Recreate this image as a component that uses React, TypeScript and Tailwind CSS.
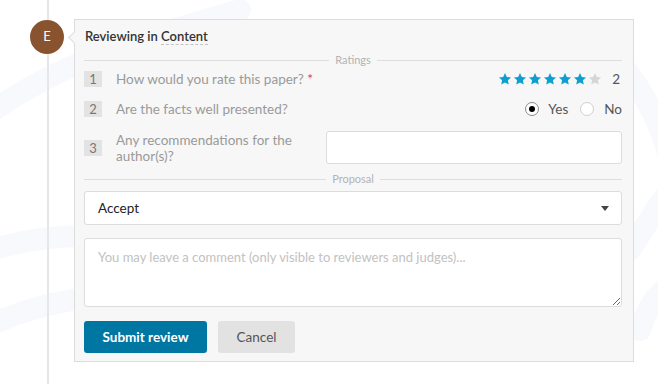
import { useState } from "react";

const font = { fontFamily: "Lato, 'Noto Sans', sans-serif" };

function Star({ filled }: { filled: boolean }) {
  return (
    <svg width="14" height="14" viewBox="0 0 24 24" className="shrink-0">
      <path
        d="M12 1.8l3.1 6.6 7.2.9-5.3 5 1.4 7.1L12 17.9l-6.4 3.5 1.4-7.1-5.3-5 7.2-.9z"
        fill={filled ? "#0e9fd2" : "#d6d6d6"}
      />
    </svg>
  );
}

function Divider({ label }: { label: string }) {
  return (
    <div className="flex items-center h-[14px]">
      <div className="flex-1 h-px bg-[#dedede]"></div>
      <span className="px-[6px] text-[11px] leading-[14px] text-[#b3b3b3]">{label}</span>
      <div className="flex-1 h-px bg-[#dedede]"></div>
    </div>
  );
}

function Num({ n }: { n: number }) {
  return (
    <div className="w-[18px] h-[16px] shrink-0 bg-[#e3e3e3] text-[#777] text-[13px] leading-[16px] text-center">
      {n}
    </div>
  );
}

export default function App() {
  const [facts, setFacts] = useState<"yes" | "no">("yes");
  const rating = 6;

  return (
    <div className="relative w-[658px] h-[384px] bg-white overflow-hidden" style={font}>
      {/* faint watermark in the background */}
      <svg className="absolute inset-0 pointer-events-none" width="658" height="384" viewBox="0 0 658 384">
        <g fill="none" stroke="#f7f9fd" strokeWidth="22" strokeLinecap="round">
          <path d="M-20 120 C 60 60, 140 40, 240 10" />
          <path d="M-10 250 C 60 230, 120 230, 200 260" />
          <path d="M-20 330 C 40 300, 100 290, 180 300" />
          <path d="M600 40 C 640 80, 660 120, 670 160" />
          <path d="M630 250 C 650 220, 660 200, 680 180" />
          <path d="M640 330 C 650 300, 660 290, 680 280" />
        </g>
      </svg>

      <div className="relative ml-[47px] h-full border-l-2 border-[#e6e6e6] pt-[19px]">
        <div className="flex items-start">
          <div className="-ml-[19px] mt-[1px] w-[34px] h-[34px] shrink-0 rounded-full bg-[#8a5330] text-white text-[13px] flex items-center justify-center">
            E
          </div>

          <div className="relative ml-[10px] w-[560px] bg-[#f7f7f7] border border-[#dcdcdc] pl-[9px] pr-[11px] pt-[6px] pb-[8px]">
            <div className="absolute -left-[5px] top-[13px] w-[9px] h-[9px] rotate-45 bg-[#f7f7f7] border-l border-b border-[#dcdcdc]"></div>

            <div className="h-[20px] leading-[20px] text-[13px] font-semibold text-[#333] pl-px">
              Reviewing in <span className="border-b border-dashed border-[#c4c4c4]">Content</span>
            </div>

            <div className="mt-[7px]">
              <Divider label="Ratings" />
            </div>

            {/* question 1 */}
            <div className="mt-[4px] h-[16px] flex items-center">
              <Num n={1} />
              <span className="ml-[14px] text-[13.5px] text-[#9a9a9a]">
                How would you rate this paper? <span className="text-[#e53935]">*</span>
              </span>
              <div className="ml-auto flex items-center gap-px">
                {[0, 1, 2, 3, 4, 5, 6].map((i) => (
                  <Star key={i} filled={i < rating} />
                ))}
                <span className="ml-[9px] mr-[2px] text-[13.5px] text-[#555]">2</span>
              </div>
            </div>

            {/* question 2 */}
            <div className="mt-[14px] h-[16px] flex items-center">
              <Num n={2} />
              <span className="ml-[14px] text-[13.5px] text-[#9a9a9a]">Are the facts well presented?</span>
              <div className="ml-auto flex items-center text-[13.5px] text-[#555]">
                <button onClick={() => setFacts("yes")} className="flex items-center">
                  <span
                    className={
                      facts === "yes"
                        ? "w-[14px] h-[14px] rounded-full border border-[#8a8a8a] bg-white flex items-center justify-center"
                        : "w-[14px] h-[14px] rounded-full border border-[#cfcfcf] bg-white flex items-center justify-center"
                    }
                  >
                    {facts === "yes" && <span className="w-[6px] h-[6px] rounded-full bg-black"></span>}
                  </span>
                  <span className="ml-[9px]">Yes</span>
                </button>
                <button onClick={() => setFacts("no")} className="ml-[12px] flex items-center">
                  <span
                    className={
                      facts === "no"
                        ? "w-[14px] h-[14px] rounded-full border border-[#8a8a8a] bg-white flex items-center justify-center"
                        : "w-[14px] h-[14px] rounded-full border border-[#cfcfcf] bg-white flex items-center justify-center"
                    }
                  >
                    {facts === "no" && <span className="w-[6px] h-[6px] rounded-full bg-black"></span>}
                  </span>
                  <span className="ml-[10px]">No</span>
                </button>
              </div>
            </div>

            {/* question 3 */}
            <div className="mt-[14px] h-[33px] flex items-center">
              <Num n={3} />
              <span className="ml-[14px] w-[196px] text-[13.5px] leading-[16px] text-[#9a9a9a]">
                Any recommendations for the author(s)?
              </span>
              <input className="ml-[14px] flex-1 h-[33px] bg-white border border-[#dcdcdc] rounded-[3px] px-[10px] text-[13px] outline-none" />
            </div>

            <div className="mt-[8px]">
              <Divider label="Proposal" />
            </div>

            <div className="mt-[5px] h-[34px] bg-white border border-[#dcdcdc] rounded-[3px] flex items-center pl-[13px] pr-[12px]">
              <span className="text-[13.5px] text-[#222]">Accept</span>
              <svg className="ml-auto" width="8" height="5" viewBox="0 0 8 5">
                <path d="M0 0h8L4 5z" fill="#444" />
              </svg>
            </div>

            <textarea
              className="mt-[13px] block w-full h-[69px] bg-white border border-[#dcdcdc] rounded-[3px] px-[13px] pt-[10px] text-[13px] leading-[16px] text-[#333] placeholder:text-[#c2c2c2] outline-none"
              placeholder="You may leave a comment (only visible to reviewers and judges)..."
            />

            <div className="mt-[14px] flex gap-[11px]">
              <button className="w-[123px] h-[32px] rounded-[3px] bg-[#0077a3] text-white text-[13.5px] font-bold">
                Submit review
              </button>
              <button className="w-[77px] h-[32px] rounded-[3px] bg-[#e2e2e2] text-[#555] text-[13.5px]">
                Cancel
              </button>
            </div>
          </div>
        </div>
      </div>
    </div>
  );
}
